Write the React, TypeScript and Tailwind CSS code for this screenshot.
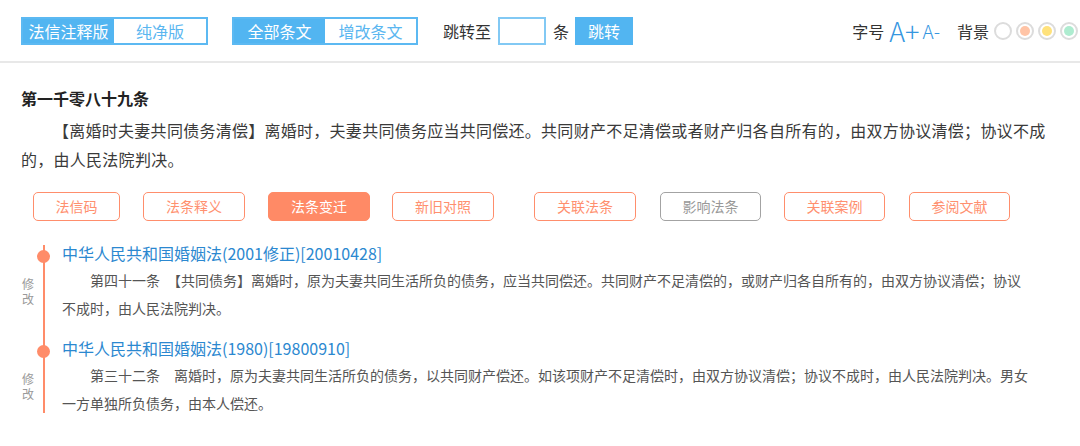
import React from "react";

const tabs = [
  { label: "法信码", w: "w-[87px]", ml: "ml-[12px]", active: false, muted: false },
  { label: "法条释义", w: "w-[102px]", ml: "ml-[23px]", active: false, muted: false },
  { label: "法条变迁", w: "w-[102px]", ml: "ml-[23px]", active: true, muted: false },
  { label: "新旧对照", w: "w-[102px]", ml: "ml-[22px]", active: false, muted: false },
  { label: "关联法条", w: "w-[102px]", ml: "ml-[40px]", active: false, muted: false },
  { label: "影响法条", w: "w-[101px]", ml: "ml-[24px]", active: false, muted: true },
  { label: "关联案例", w: "w-[101px]", ml: "ml-[23px]", active: false, muted: false },
  { label: "参阅文献", w: "w-[101px]", ml: "ml-[24px]", active: false, muted: false },
];

const history = [
  {
    title: "中华人民共和国婚姻法(2001修正)[20010428]",
    body: "第四十一条　【共同债务】离婚时，原为夫妻共同生活所负的债务，应当共同偿还。共同财产不足清偿的，或财产归各自所有的，由双方协议清偿；协议不成时，由人民法院判决。",
  },
  {
    title: "中华人民共和国婚姻法(1980)[19800910]",
    body: "第三十二条　离婚时，原为夫妻共同生活所负的债务，以共同财产偿还。如该项财产不足清偿时，由双方协议清偿；协议不成时，由人民法院判决。男女一方单独所负债务，由本人偿还。",
  },
];

const swatches = ["bg-white", "bg-[#ffc4a6]", "bg-[#ffe27c]", "bg-[#aeecd0]"];

function Header() {
  return (
    <div className="flex h-[63px] items-center border-b-2 border-[#e8e8e8] pl-[21px] pr-[2px] text-[16px] text-[#333]">
      <div className="flex h-[28px] border-2 border-[#5cb9f2]">
        <div className="flex w-[91px] items-center justify-center bg-[#52b5f1] text-white">法信注释版</div>
        <div className="flex w-[92px] items-center justify-center bg-white text-[#5ab6f0]">纯净版</div>
      </div>
      <div className="ml-[24px] flex h-[28px] border-2 border-[#5cb9f2]">
        <div className="flex w-[91px] items-center justify-center bg-[#52b5f1] text-white">全部条文</div>
        <div className="flex w-[91px] items-center justify-center bg-white text-[#5ab6f0]">增改条文</div>
      </div>
      <span className="ml-[25px]">跳转至</span>
      <div className="ml-[7px] h-[28px] w-[48px] border-2 border-[#82c9f4] bg-white" />
      <span className="ml-[7px]">条</span>
      <button
        type="button"
        className="ml-[6px] flex h-[28px] w-[58px] items-center justify-center bg-[#52b5f1] text-white"
      >
        跳转
      </button>

      <div className="ml-auto flex items-center">
        <span>字号</span>
        <span className="ml-[5px] text-[27px] leading-none font-light text-[#3596df]">A+</span>
        <span className="ml-[3px] text-[19px] leading-none font-light text-[#3596df]">A-</span>
        <span className="ml-[17px]">背景</span>
        <div className="ml-[5px] flex gap-[4px]">
          {swatches.map((c) => (
            <div key={c} className="h-[18px] w-[18px] rounded-full border-2 border-[#dcdcdc] bg-white p-[2px]">
              <div className={`h-full w-full rounded-full ${c}`} />
            </div>
          ))}
        </div>
      </div>
    </div>
  );
}

function Article() {
  return (
    <div className="pl-[21px]">
      <h2 className="mt-[23px] text-[16px] leading-[24px] font-bold text-[#222]">第一千零八十九条</h2>
      <p className="mt-[6px] w-[1031px] indent-[32px] text-[16px] leading-[29px] tracking-[0.27px] text-[#3a3a3a]">
        【离婚时夫妻共同债务清偿】离婚时，夫妻共同债务应当共同偿还。共同财产不足清偿或者财产归各自所有的，由双方协议清偿；协议不成的，由人民法院判决。
      </p>

      <div className="mt-[18px] flex">
        {tabs.map((t) => (
          <div
            key={t.label}
            className={
              t.active
                ? `${t.ml} ${t.w} flex h-[29px] items-center justify-center rounded-[5px] border-[1.5px] border-[#ff8a66] bg-[#ff8a66] text-[14px] text-white`
                : t.muted
                  ? `${t.ml} ${t.w} flex h-[29px] items-center justify-center rounded-[5px] border-[1.5px] border-[#a3a3a3] bg-white text-[14px] text-[#999]`
                  : `${t.ml} ${t.w} flex h-[29px] items-center justify-center rounded-[5px] border-[1.5px] border-[#ff8e6c] bg-white text-[14px] text-[#ff906f]`
            }
          >
            {t.label}
          </div>
        ))}
      </div>

      <div className="relative mt-[20px]">
        <div className="absolute top-[4px] bottom-[4px] left-[22px] w-[2px] bg-[#ff8c69]" />
        {history.map((h, i) => (
          <div key={h.title} className={i > 0 ? "mt-[14px] flex" : "flex"}>
            <div className="relative w-[41px] shrink-0">
              <div className="absolute top-[9px] left-[16px] h-[13px] w-[13px] rounded-full bg-[#ff8c69]" />
              <div className="w-[14px] pt-[35px] text-center text-[12px] leading-[15px] text-[#999]">
                修<br />改
              </div>
            </div>
            <div className="w-[971px]">
              <div className="text-[16px] leading-[24px] text-[#2b88d0]">{h.title}</div>
              <p className="mt-[1px] indent-[28px] text-[14px] leading-[28px] text-[#555]">{h.body}</p>
            </div>
          </div>
        ))}
      </div>
    </div>
  );
}

export default function App() {
  return (
    <div className="h-[446px] w-[1080px] overflow-hidden bg-white font-['Noto_Sans_CJK_SC','Noto_Sans',sans-serif]">
      <Header />
      <Article />
    </div>
  );
}
